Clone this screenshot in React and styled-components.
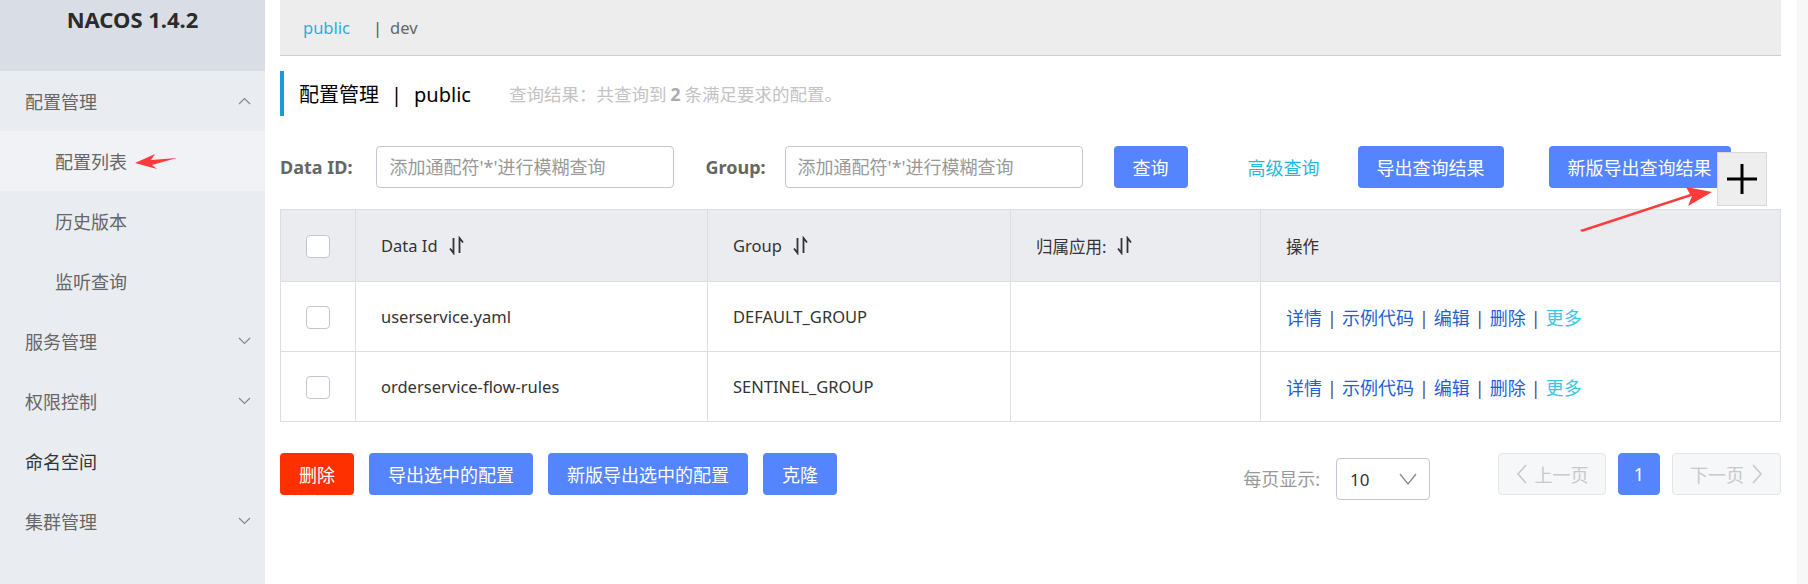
import styled, { createGlobalStyle } from "styled-components";

const GlobalStyle = createGlobalStyle`
  body {
    margin: 0;
    background: #fff;
    font-family: "Noto Sans", "Noto Sans CJK SC", sans-serif;
  }
`;

const Layout = styled.div`
  display: flex;
  height: 584px;
  overflow: hidden;
`;

const Sidebar = styled.aside`
  position: relative;
  width: 265px;
  flex-shrink: 0;
  background: #e9ecf1;
`;

const Brand = styled.div`
  height: 71px;
  box-sizing: border-box;
  padding-top: 4px;
  background: #d9dee6;
  text-align: center;
  font-size: 22px;
  line-height: 30px;
  font-weight: 700;
  color: #2b2b2b;
`;

const MenuItem = styled.div`
  display: flex;
  align-items: center;
  justify-content: space-between;
  height: 60px;
  padding: 0 14px 0 ${(p) => (p.$sub ? "55px" : "25px")};
  font-size: 18px;
  color: ${(p) => (p.$dark ? "#333" : "#666")};
  background: ${(p) => (p.$active ? "#f0f2f5" : "transparent")};
`;

const SideArrow = styled.svg`
  position: absolute;
  left: 133px;
  top: 152px;
`;

const Chevron = ({ up }) => (
  <svg width="13" height="8" viewBox="0 0 13 8">
    <path
      d={up ? "M1 7 L6.5 1.5 L12 7" : "M1 1 L6.5 6.5 L12 1"}
      fill="none"
      stroke="#888"
      strokeWidth="1.2"
    />
  </svg>
);

const Main = styled.main`
  position: relative;
  flex: 1;
  padding: 0 16px 0 15px;
`;

const ScrollTrack = styled.div`
  width: 11px;
  flex-shrink: 0;
  background: #f7f7f7;
`;

const TopBar = styled.div`
  display: flex;
  align-items: center;
  height: 55px;
  padding-left: 23px;
  background: #ededed;
  border-bottom: 1px solid #cfcfcf;
  font-size: 16.5px;
  color: #666;
`;

const NsLink = styled.span`
  color: ${(p) => (p.$current ? "#1fb1dc" : "#666")};
  margin-right: ${(p) => (p.$current ? "23px" : "0")};
`;

const Bar = styled.span`
  margin-right: 8px;
  color: #555;
`;

const TitleRow = styled.div`
  display: flex;
  align-items: center;
  height: 45px;
  margin-top: 15px;
  padding-left: 15px;
  border-left: 4px solid #1a9bd7;
`;

const Title = styled.h1`
  margin: 0;
  font-size: 20px;
  font-weight: 400;
  color: #000;
`;

const TitleSep = styled.span`
  margin: 0 12px;
`;

const Result = styled.span`
  margin-left: 38px;
  font-size: 17.5px;
  color: #c3c3c3;

  b {
    color: #aaa;
    margin: 0 4px;
  }
`;

const SearchRow = styled.div`
  display: flex;
  align-items: center;
  height: 42px;
  margin-top: 30px;
`;

const Label = styled.label`
  font-size: 18px;
  font-weight: 700;
  color: #666;
  margin-left: ${(p) => p.$ml || "0"};
  margin-right: ${(p) => p.$mr || "0"};
`;

const Input = styled.input`
  width: 298px;
  height: 42px;
  box-sizing: border-box;
  padding: 0 12px;
  border: 1px solid #c4c6cf;
  border-radius: 4px;
  font: inherit;
  font-size: 18px;
  outline: none;

  &::placeholder {
    color: #999;
  }
`;

const Button = styled.button`
  height: 42px;
  padding: 0 19px;
  border: 0;
  border-radius: 4px;
  background: ${(p) => (p.$danger ? "#ff3000" : "#5584ff")};
  color: #fff;
  font: inherit;
  font-size: 18px;
  margin-left: ${(p) => p.$ml || "0"};
  white-space: nowrap;
`;

const TextLink = styled.a`
  margin-left: 60px;
  font-size: 18px;
  color: #1fb9dc;
`;

const Table = styled.table`
  width: 1501px;
  margin-top: 21px;
  border-collapse: collapse;
  table-layout: fixed;
  color: #333;
`;

const Th = styled.th`
  height: 71px;
  padding: 0 0 0 ${(p) => (p.$check ? "0" : "25px")};
  text-align: ${(p) => (p.$check ? "center" : "left")};
  background: #ebecf0;
  border: 1px solid #dcdee3;
  font-size: 16.5px;
  font-weight: 400;
`;

const Td = styled.td`
  height: 69px;
  padding: 0 0 0 ${(p) => (p.$check ? "0" : "25px")};
  text-align: ${(p) => (p.$check ? "center" : "left")};
  border: 1px solid #dcdee3;
  font-size: 16.5px;
`;

const HeadCell = styled.span`
  display: inline-flex;
  align-items: center;
  gap: 11px;
`;

const Checkbox = styled.span`
  display: inline-block;
  width: 24px;
  height: 23px;
  box-sizing: border-box;
  vertical-align: middle;
  background: #fff;
  border: 1px solid #c4c6cf;
  border-radius: 4px;
`;

const Actions = styled.div`
  font-size: 18px;
  color: #1f5fd6;
`;

const ActSep = styled.span`
  color: #555;
  margin: 0 5px;
`;

const More = styled.span`
  color: #3cc6e6;
`;

const Footer = styled.div`
  display: flex;
  align-items: flex-start;
  margin-top: 31px;
  gap: 15px;
`;

const Pager = styled.div`
  display: flex;
  align-items: flex-start;
  margin-left: auto;
`;

const PageLabel = styled.span`
  height: 42px;
  margin-top: 5px;
  line-height: 42px;
  font-size: 18px;
  color: #999;
`;

const Select = styled.div`
  display: flex;
  align-items: center;
  justify-content: space-between;
  width: 94px;
  height: 42px;
  box-sizing: border-box;
  margin: 5px 0 0 16px;
  padding: 0 12px 0 13px;
  border: 1px solid #c4c6cf;
  border-radius: 4px;
  font-size: 17px;
  color: #333;
`;

const PageBtn = styled.div`
  display: flex;
  align-items: center;
  justify-content: center;
  gap: 8px;
  height: 42px;
  box-sizing: border-box;
  width: ${(p) => p.$w};
  margin-left: ${(p) => p.$ml};
  border: 1px solid ${(p) => (p.$active ? "#5584ff" : "#e3e4e8")};
  border-radius: 4px;
  background: ${(p) => (p.$active ? "#5584ff" : "#f6f7f9")};
  color: ${(p) => (p.$active ? "#fff" : "#c8c8c8")};
  font-size: 18px;
`;

const PlusBox = styled.div`
  position: absolute;
  left: 1452px;
  top: 152px;
  width: 50px;
  height: 54px;
  box-sizing: border-box;
  display: flex;
  align-items: center;
  justify-content: center;
  background: #eeeeee;
  border: 1px solid #d8d8d8;
`;

const PointerArrow = styled.svg`
  position: absolute;
  left: 1315px;
  top: 184px;
`;

const SortIcon = () => (
  <svg width="15" height="19" viewBox="0 0 15 19">
    <path d="M4.5 2 V17 L1 12.5" fill="none" stroke="#333" strokeWidth="1.8" />
    <path d="M10.5 17 V2 L14 6.5" fill="none" stroke="#333" strokeWidth="1.8" />
  </svg>
);

const Angle = ({ dir }) => (
  <svg width="11" height="20" viewBox="0 0 11 20">
    <path
      d={dir === "left" ? "M10 1 L2 10 L10 19" : "M1 1 L9 10 L1 19"}
      fill="none"
      stroke="#c8c8c8"
      strokeWidth="1.6"
    />
  </svg>
);

const rows = [
  { id: "userservice.yaml", group: "DEFAULT_GROUP" },
  { id: "orderservice-flow-rules", group: "SENTINEL_GROUP" },
];

const menu = [
  { label: "配置管理", chevron: "up" },
  { label: "配置列表", sub: true, active: true },
  { label: "历史版本", sub: true },
  { label: "监听查询", sub: true },
  { label: "服务管理", chevron: "down" },
  { label: "权限控制", chevron: "down" },
  { label: "命名空间", dark: true },
  { label: "集群管理", chevron: "down" },
];

export default function App() {
  return (
    <Layout>
      <GlobalStyle />
      <Sidebar>
        <Brand>NACOS 1.4.2</Brand>
        {menu.map((m) => (
          <MenuItem key={m.label} $sub={m.sub} $active={m.active} $dark={m.dark}>
            <span>{m.label}</span>
            {m.chevron && <Chevron up={m.chevron === "up"} />}
          </MenuItem>
        ))}
        <SideArrow width="46" height="18" viewBox="0 0 46 18">
          <polygon points="2,11 22,2 18,8 44,6 19,13 24,17" fill="#ff3a3a" />
        </SideArrow>
      </Sidebar>

      <Main>
        <TopBar>
          <NsLink $current>public</NsLink>
          <Bar>|</Bar>
          <NsLink>dev</NsLink>
        </TopBar>

        <TitleRow>
          <Title>
            配置管理<TitleSep>|</TitleSep>public
          </Title>
          <Result>
            查询结果：共查询到<b>2</b>条满足要求的配置。
          </Result>
        </TitleRow>

        <SearchRow>
          <Label $mr="24px">Data ID:</Label>
          <Input placeholder="添加通配符'*'进行模糊查询" />
          <Label $ml="31px" $mr="19px">Group:</Label>
          <Input placeholder="添加通配符'*'进行模糊查询" />
          <Button $ml="31px">查询</Button>
          <TextLink>高级查询</TextLink>
          <Button $ml="38px">导出查询结果</Button>
          <Button $ml="45px">新版导出查询结果</Button>
        </SearchRow>

        <Table>
          <colgroup>
            <col style={{ width: 75 }} />
            <col style={{ width: 352 }} />
            <col style={{ width: 303 }} />
            <col style={{ width: 250 }} />
            <col />
          </colgroup>
          <thead>
            <tr>
              <Th $check>
                <Checkbox />
              </Th>
              <Th>
                <HeadCell>
                  Data Id <SortIcon />
                </HeadCell>
              </Th>
              <Th>
                <HeadCell>
                  Group <SortIcon />
                </HeadCell>
              </Th>
              <Th>
                <HeadCell>
                  归属应用: <SortIcon />
                </HeadCell>
              </Th>
              <Th>操作</Th>
            </tr>
          </thead>
          <tbody>
            {rows.map((r) => (
              <tr key={r.id}>
                <Td $check>
                  <Checkbox />
                </Td>
                <Td>{r.id}</Td>
                <Td>{r.group}</Td>
                <Td />
                <Td>
                  <Actions>
                    详情<ActSep>|</ActSep>示例代码<ActSep>|</ActSep>编辑
                    <ActSep>|</ActSep>删除<ActSep>|</ActSep>
                    <More>更多</More>
                  </Actions>
                </Td>
              </tr>
            ))}
          </tbody>
        </Table>

        <Footer>
          <Button $danger>删除</Button>
          <Button>导出选中的配置</Button>
          <Button>新版导出选中的配置</Button>
          <Button>克隆</Button>
          <Pager>
            <PageLabel>每页显示:</PageLabel>
            <Select>
              <span>10</span>
              <svg width="18" height="12" viewBox="0 0 18 12">
                <path d="M1 1 L9 11 L17 1" fill="none" stroke="#888" strokeWidth="1.3" />
              </svg>
            </Select>
            <PageBtn $w="108px" $ml="68px">
              <Angle dir="left" />
              上一页
            </PageBtn>
            <PageBtn $w="42px" $ml="12px" $active>
              1
            </PageBtn>
            <PageBtn $w="109px" $ml="12px">
              下一页
              <Angle dir="right" />
            </PageBtn>
          </Pager>
        </Footer>

        <PlusBox>
          <svg width="32" height="32" viewBox="0 0 32 32">
            <path d="M16 1 V31 M1 16 H31" stroke="#000" strokeWidth="3" />
          </svg>
        </PlusBox>
        <PointerArrow width="135" height="52" viewBox="0 0 135 52">
          <polygon points="2,48 112,12 108,22 132,8 106,3 110,10 0,46" fill="#ff3a3a" />
        </PointerArrow>
      </Main>
      <ScrollTrack />
    </Layout>
  );
}
